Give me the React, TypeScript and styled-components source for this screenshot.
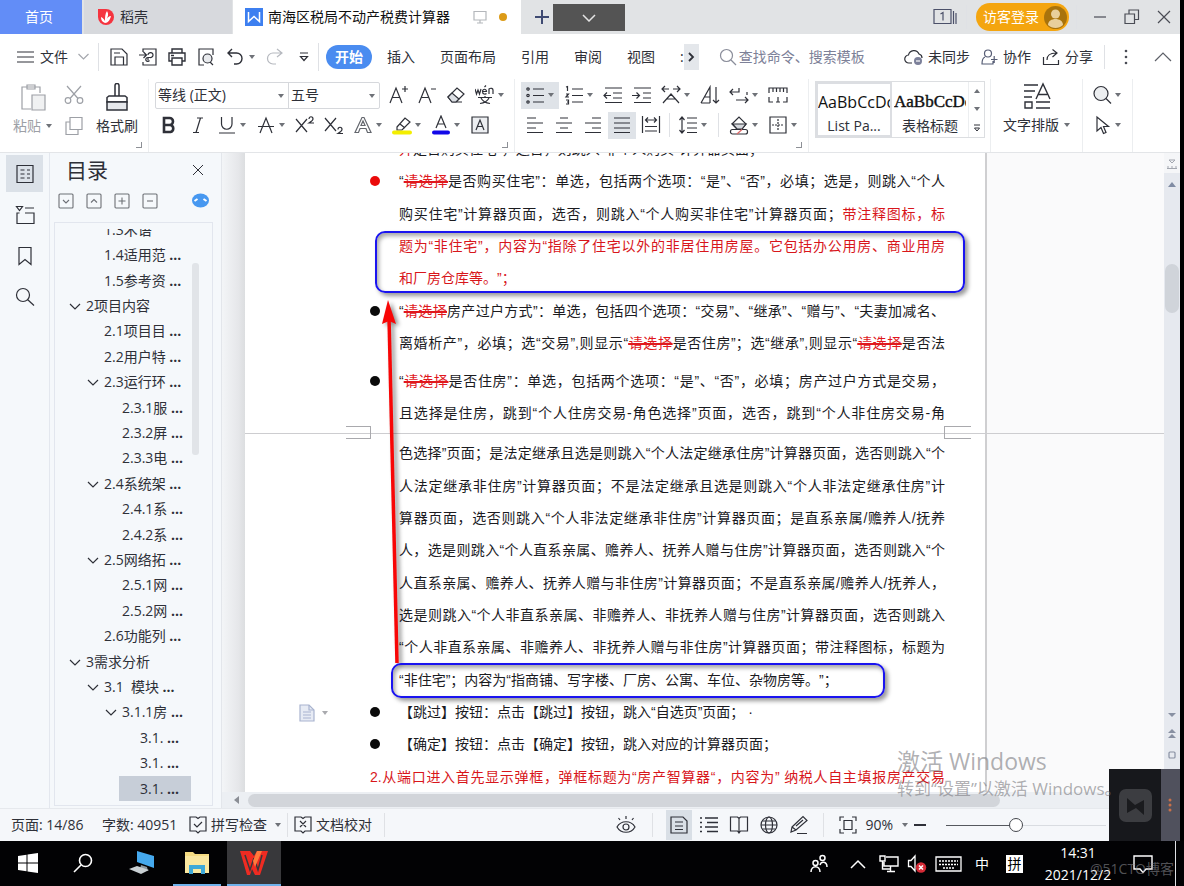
import React from 'react';
import styled, { createGlobalStyle, css } from 'styled-components';

const ui = `"Open Sans", "Noto Sans CJK SC", sans-serif`;
const ink = '#2e3038';

const Global = createGlobalStyle`
  * { box-sizing: border-box; }
  html, body { margin: 0; padding: 0; background: #000; }
  body { font-family: ${ui}; font-size: 14px; line-height: 20px; color: ${ink}; overflow: hidden; }
  button, input, select { font: inherit; color: inherit; }
  button { border: 0; background: none; padding: 0; margin: 0; white-space: nowrap; }
`;

const Desktop = styled.div`
  display: flex;
  flex-direction: column;
  height: 100vh;
`;

const Shell = styled.div`
  position: relative;
  flex: 1;
  min-height: 0;
  margin-right: 4px;
  display: flex;
  flex-direction: column;
  background: #fff;
`;

/* ---------- shared ---------- */

type IconProps = { w?: number; h?: number; sw?: number; color?: string; children: React.ReactNode };
const Icon = ({ w = 20, h = 20, sw = 1.2, color = 'currentColor', children }: IconProps) => (
  <svg width={w} height={h} viewBox={`0 0 ${w} ${h}`} fill="none" stroke={color} strokeWidth={sw} aria-hidden="true">
    {children}
  </svg>
);

const Row = styled.div`
  display: flex;
  align-items: center;
`;

const Rule = styled.span<{ $h?: number; $m?: number }>`
  flex: none;
  width: 1px;
  height: ${(p) => p.$h ?? 24}px;
  margin: 0 ${(p) => p.$m ?? 0}px;
  background: #dfe1e5;
`;

const Caret = styled.span`
  flex: none;
  width: 0;
  height: 0;
  border: 3px solid transparent;
  border-top: 4px solid #6f7278;
  border-bottom: 0;
`;

/* ---------- tab strip ---------- */

const TabStrip = styled.header`
  flex: none;
  display: flex;
  height: 34px;
  background: #e1e3e5;
`;

const Tab = styled.button<{ $kind: 'home' | 'idle' | 'active' }>`
  display: flex;
  align-items: center;
  height: 34px;
  margin-right: 2px;
  ${(p) => p.$kind === 'home' && css`width: 82px; padding-right: 4px; justify-content: center; background: #628df7; color: #fff;`}
  ${(p) => p.$kind === 'idle' && css`width: 148px; padding-left: 13px; gap: 5px; background: #d7d9dd; margin-right: 1px;`}
  ${(p) => p.$kind === 'active' && css`width: 288px; padding-left: 12px; gap: 5px; background: #fff; color: #111; margin-right: 0;`}
`;

const TabMarks = styled.span`
  display: flex;
  align-items: center;
  gap: 12px;
  margin-left: 18px;
`;

const Dirty = styled.span`
  width: 8px;
  height: 8px;
  border-radius: 50%;
  background: #dc9b17;
`;

const PlusButton = styled.button`
  width: 32px;
  padding-left: 10px;
  color: #3f4a72;
  svg { display: block; }
`;

const DarkDrop = styled.button`
  width: 72px;
  height: 27px;
  margin-top: 4px;
  background: #545454;
  color: #e4e4e4;
  svg { display: block; margin: auto; }
`;

const WindowTools = styled.div`
  display: flex;
  align-items: center;
  margin-left: auto;
`;

const Login = styled.button`
  display: flex;
  align-items: center;
  gap: 5px;
  height: 28px;
  width: 93px;
  padding-left: 7px;
  border-radius: 14px;
  background: #f4a50f;
  color: #fff;
`;

const WinButton = styled.button`
  width: 32px;
  height: 34px;
  color: #4a4c55;
  svg { display: block; margin: auto; }
`;

/* ---------- menu row ---------- */

const MenuRow = styled.nav`
  flex: none;
  display: flex;
  align-items: center;
  height: 45px;
  padding-left: 17px;
`;

const FileButton = styled.button`
  display: flex;
  align-items: center;
  gap: 6px;
  margin-right: 4px;
  svg:last-child { margin-left: 4px; }
`;

const QuickTools = styled(Row)`
  > ${Caret} { margin-right: 5px; }
`;

const QuickButton = styled.button<{ $dim?: boolean }>`
  width: 29px;
  height: 26px;
  color: ${(p) => (p.$dim ? '#b6b9bf' : ink)};
  svg { display: block; margin: auto; }
`;

const ActiveMenu = styled.button`
  width: 46px;
  height: 24px;
  margin: 0 15px 0 7px;
  border-radius: 12px;
  background: #4a8cf0;
  color: #fff;
  font-weight: 700;
`;

const MenuTabs = styled.div`
  display: flex;
  gap: 25px;
`;

const MoreMenus = styled.button`
  width: 15px;
  height: 26px;
  background: #e4e7eb;
  svg { display: block; margin: auto; }
`;

const Search = styled.label`
  display: flex;
  align-items: center;
  gap: 2px;
  margin-left: 20px;
  color: #8a8d9a;
  input {
    width: 140px;
    border: 0;
    padding: 0;
    background: none;
    outline: 0;
    &::placeholder { color: #7d8198; opacity: 1; }
  }
`;

const Cloud = styled.div`
  display: flex;
  align-items: center;
  gap: 11px;
  margin-left: auto;
`;

const CloudButton = styled.button`
  display: flex;
  align-items: center;
  gap: 5px;
`;

const Bare = styled.button<{ $w: number }>`
  width: ${(p) => p.$w}px;
  svg { display: block; margin: auto; }
`;

/* ---------- ribbon ---------- */

const Ribbon = styled.section`
  flex: none;
  display: flex;
  height: 74px;
  border-bottom: 1px solid #e3e5e8;
`;

const Group = styled.div<{ $w: number; $pad?: number }>`
  position: relative;
  flex: none;
  width: ${(p) => p.$w}px;
  padding: 2px 0 0 ${(p) => p.$pad ?? 6}px;
  border-right: 1px solid #eceef0;
`;

const Launcher = styled.button`
  position: absolute;
  right: 6px;
  bottom: 4px;
  width: 6px;
  height: 6px;
  border: solid #8d9096;
  border-width: 0 1px 1px 0;
`;

const ToolRow = styled.div`
  display: flex;
  align-items: center;
  gap: 1px;
  height: 28px;
  margin-bottom: 2px;
`;

const ToolBox = styled.button<{ $on?: boolean }>`
  flex: none;
  display: flex;
  align-items: center;
  height: 27px;
  background: ${(p) => (p.$on ? '#dfe3e8' : 'none')};
  > svg { display: block; margin: 0 4px; }
  ${Caret} { margin: 0 5px 0 -1px; }
`;

const Tool = ({ label, caret, on, children }: { label: string; caret?: boolean; on?: boolean; children: React.ReactNode }) => (
  <ToolBox aria-label={label} $on={on}>
    <Icon>{children}</Icon>
    {caret && <Caret />}
  </ToolBox>
);

const BigTool = styled.button<{ $dim?: boolean }>`
  display: flex;
  flex-direction: column;
  align-items: center;
  gap: 5px;
  color: ${(p) => (p.$dim ? '#9da0a6' : ink)};
  > svg { display: block; margin-top: 1px; }
  span { display: flex; align-items: center; gap: 5px; }
`;

const Clipboard = styled.div`
  display: flex;
  padding-top: 1px;
`;

const Stack = styled.div`
  display: flex;
  flex-direction: column;
  align-items: center;
  width: 44px;
  gap: 11px;
  padding-top: 3px;
  color: #9da0a6;
  button { height: 20px; }
  svg { display: block; }
`;

const FontBox = styled.div`
  display: flex;
  width: 225px;
  height: 27px;
  margin-right: 3px;
  border: 1px solid #d6d8dc;
  border-radius: 2px;
`;

const SelectWrap = styled.label<{ $w: number }>`
  position: relative;
  display: block;
  width: ${(p) => p.$w}px;
  & + & { border-left: 1px solid #d6d8dc; }
  select {
    width: 100%;
    height: 25px;
    padding: 0 0 0 2px;
    border: 0;
    background: none;
    appearance: none;
    outline: 0;
  }
  ${Caret} { position: absolute; right: 4px; top: 11px; }
`;

const Gallery = styled.div`
  display: flex;
  width: 170px;
  height: 57px;
  border: 1px solid #dcdee1;
`;

const StyleCard = styled.button<{ $on?: boolean; $serif?: boolean }>`
  width: 76px;
  overflow: hidden;
  text-align: center;
  border: 2px solid ${(p) => (p.$on ? '#dcdee2' : 'transparent')};
  b {
    display: block;
    overflow: hidden;
    height: 26px;
    margin-top: 6px;
    text-align: left;
    color: #111;
    font: ${(p) => (p.$serif ? '400 17px/24px "Liberation Serif", serif' : '400 16px/24px "Open Sans", sans-serif')};
    -webkit-text-stroke: ${(p) => (p.$serif ? '0.4px #111' : '0')};
  }
`;

const GallerySteps = styled.div`
  flex: 1;
  display: flex;
  flex-direction: column;
  border-left: 1px solid #eceef0;
  button { flex: 1; }
  svg { display: block; margin: auto; }
`;

/* ---------- work area ---------- */

const Work = styled.main`
  flex: 1;
  min-height: 0;
  display: flex;
  background: #f5f8fb;
`;

const SideStrip = styled.aside`
  flex: none;
  width: 50px;
  padding: 2px 0 0 6px;
  border-right: 1px solid #e3e7ee;
`;

const SideButton = styled.button<{ $on?: boolean }>`
  display: block;
  width: 37px;
  height: 37px;
  margin-bottom: 4px;
  background: ${(p) => (p.$on ? '#dbe1e8' : 'none')};
  svg { display: block; margin: auto; }
`;

const Outline = styled.aside`
  flex: none;
  display: flex;
  flex-direction: column;
  width: 172px;
  padding: 0 8px 0 4px;
  border-right: 1px solid #e3e6eb;
`;

const OutlineHead = styled.div`
  display: flex;
  align-items: center;
  justify-content: space-between;
  height: 34px;
  padding: 0 9px 0 12px;
  h2 { margin: 0; font: 400 21px/30px ${ui}; }
  svg { display: block; }
`;

const OutlineTools = styled.div`
  display: flex;
  align-items: center;
  gap: 12px;
  height: 35px;
  padding: 0 4px 8px 4px;
  svg { display: block; }
  button:last-child { margin-left: auto; }
`;

const OutlineBox = styled.div`
  position: relative;
  flex: 1;
  min-height: 0;
  margin-bottom: 2px;
  padding-top: 6px;
  border: 1px solid #e2e6ee;
  overflow: hidden;
`;

const OutlineClip = styled.ul`
  height: 100%;
  overflow: hidden;
  margin: 0;
  padding: 0;
  list-style: none;
`;

const OutlineItem = styled.li<{ $level: number; $on?: boolean }>`
  display: flex;
  align-items: center;
  height: 25px;
  margin-right: 21px;
  margin-left: ${(p) => 10 + p.$level * 18}px;
  background: ${(p) => (p.$on ? '#c7ced8' : 'none')};
  &:first-child { margin-top: -12px; }
  &:nth-child(5n), &:nth-child(5n + 2) { height: 26px; }
  > svg, > i { flex: none; width: 12px; height: 10px; margin: 0 5px 0 4px; }
  a { color: ${ink}; text-decoration: none; white-space: nowrap; }
`;

const OutlineThumb = styled.span`
  position: absolute;
  right: 13px;
  top: 40px;
  width: 7px;
  height: 192px;
  border-radius: 3px;
  background: #e1e4e8;
`;

const Viewer = styled.section`
  flex: 1;
  min-width: 0;
  display: flex;
  flex-direction: column;
`;

const Canvas = styled.div`
  position: relative;
  flex: 1;
  min-height: 0;
  display: flex;
  overflow: hidden;
  background: #fafafb;
`;

const Gutter = styled.div`
  flex: none;
  width: 23px;
  background: linear-gradient(90deg, #f3f5f7, #e6e7ea 70%, #dcdee0);
`;

const Page = styled.article`
  position: relative;
  flex: none;
  width: 742px;
  height: 100%;
  padding-left: 125px;
  background: #fff;
  border-right: 2px solid #cfcfd1;
`;

const Lines = styled.div<{ $phase: number; $before?: number }>`
  margin-top: ${(p) => p.$before ?? 0}px;
  > div:nth-child(3n + ${(p) => p.$phase}) { height: 33px; }
`;

const LineBox = styled.div`
  display: grid;
  grid-template-columns: 29px 546px;
  align-items: center;
  height: 32px;
`;

const Dot = styled.span<{ $red?: boolean }>`
  width: 10px;
  height: 10px;
  border-radius: 50%;
  background: ${(p) => (p.$red ? '#ea0a0a' : '#0a0a0a')};
`;

const Text = styled.p<{ $full?: boolean; $red?: boolean; $wide?: boolean }>`
  margin: 0;
  grid-column: ${(p) => (p.$wide ? '1 / 3' : '2')};
  font: 400 14px/24px "Liberation Sans", "Noto Sans CJK SC", sans-serif;
  color: ${(p) => (p.$red ? '#d8161b' : '#1b1b1f')};
  white-space: nowrap;
  text-spacing-trim: space-all;
  text-align: left;
  text-align-last: ${(p) => (p.$full ? 'justify' : 'left')};
`;

const Red = styled.span`
  color: #d8161b;
`;

const Struck = styled.s`
  color: #e0181d;
  text-decoration-thickness: 2px;
`;

const PageBreak = styled.div`
  position: relative;
  height: 8px;
`;

const BreakLine = styled.span`
  position: absolute;
  left: -125px;
  top: 4px;
  width: 100vw;
  height: 1px;
  background: #cdcdd0;
`;

const Corner = styled.span<{ $side: 'left' | 'right' }>`
  position: absolute;
  top: -3px;
  left: ${(p) => (p.$side === 'left' ? -24 : 574)}px;
  width: ${(p) => (p.$side === 'left' ? 25 : 27)}px;
  height: 13px;
  border: 1px solid #a9a9ad;
  border-${(p) => p.$side}: 0;
`;

const PasteTag = styled.button`
  position: absolute;
  left: 54px;
  top: 551px;
  display: flex;
  align-items: center;
  gap: 7px;
  ${Caret} { opacity: 0.6; }
`;

const Callout = styled.div<{ $x: number; $y: number; $w: number; $h: number }>`
  position: absolute;
  left: ${(p) => p.$x}px;
  top: ${(p) => p.$y}px;
  width: ${(p) => p.$w}px;
  height: ${(p) => p.$h}px;
  border: 2px solid #1a14f0;
  border-radius: 10px;
  box-shadow: 3px 3px 4px rgba(0, 0, 0, 0.4), inset 2px 3px 4px rgba(0, 0, 0, 0.35);
`;

const Arrow = styled.svg`
  position: absolute;
  left: 130px;
  top: 144px;
  filter: drop-shadow(3px 2px 2px rgba(0, 0, 0, 0.45));
`;

const HScroll = styled.div`
  flex: none;
  display: flex;
  align-items: center;
  height: 16px;
  background: #eceff3;
  padding-left: 12px;
  gap: 9px;
  i { width: 752px; height: 13px; border-radius: 7px; background: #d2d5da; }
  svg { display: block; }
`;

const VScroll = styled.div`
  flex: none;
  display: flex;
  flex-direction: column;
  align-items: center;
  width: 16px;
  padding-bottom: 46px;
  background: #e6e9ef;
  svg { display: block; }
`;

const RulerToggle = styled.div`
  width: 100%;
  height: 20px;
  padding: 6px 3px 0;
  background: #f5f6f8;
`;

const VThumb = styled.span`
  width: 14px;
  height: 49px;
  margin: 67px 0 auto;
  border-radius: 7px;
  background: #d0d4da;
`;

const Activate = styled.div`
  position: absolute;
  left: 897px;
  bottom: 40px;
  color: rgba(125, 125, 130, 0.62);
  white-space: nowrap;
  p { margin: 0; font-size: 17px; line-height: 24px; }
  p:first-child { font-size: 23px; line-height: 32px; }
`;

const Widget = styled.div`
  position: absolute;
  right: 0;
  bottom: 0;
  display: flex;
  justify-content: flex-end;
  width: 71px;
  height: 72px;
  background: #17181c;
  svg { display: block; }
`;

/* ---------- status bar ---------- */

const StatusBar = styled.footer`
  flex: none;
  display: flex;
  align-items: center;
  height: 33px;
  padding: 0 74px 0 11px;
  background: #f5f7fa;
  border-top: 1px solid #e6e9ed;
  white-space: nowrap;
  svg { display: block; }
`;

const StatusText = styled.span<{ $w: number }>`
  width: ${(p) => p.$w}px;
`;

const StatusButton = styled.button`
  display: flex;
  align-items: center;
  gap: 4px;
  ${Caret} { margin-left: 4px; }
`;

const Views = styled.div`
  display: flex;
  align-items: center;
  gap: 4px;
  margin-left: auto;
`;

const ViewButton = styled.button<{ $on?: boolean }>`
  width: 26px;
  height: 30px;
  background: ${(p) => (p.$on ? '#d9dfe6' : 'none')};
  svg { margin: auto; }
`;

const Zoom = styled.input`
  appearance: none;
  width: 160px;
  height: 16px;
  margin: 0 0 0 14px;
  background: linear-gradient(90deg, #55585e 70px, #d9dce1 70px) center / 100% 1px no-repeat;
  &::-webkit-slider-thumb {
    appearance: none;
    width: 14px;
    height: 14px;
    border: 1px solid #44474d;
    border-radius: 50%;
    background: #fff;
  }
`;

/* ---------- task bar ---------- */

const TaskBar = styled.footer`
  position: relative;
  flex: none;
  display: flex;
  height: 45px;
  background: #020204;
  color: #fff;
  svg { display: block; }
`;

const TaskButton = styled.button<{ $w: number; $run?: boolean; $on?: boolean }>`
  width: ${(p) => p.$w}px;
  height: 45px;
  margin-left: ${(p) => (p.$on ? 6 : 0)}px;
  background: ${(p) => (p.$on ? '#38383b' : 'none')};
  border-bottom: 2px solid ${(p) => (p.$run ? '#6fb1ea' : 'transparent')};
  svg { margin: auto; }
`;

const Tray = styled.div`
  display: flex;
  align-items: center;
  margin-left: auto;
  > button:last-of-type { margin-right: 7px; }
`;

const TrayButton = styled.button<{ $w: number }>`
  width: ${(p) => p.$w}px;
  text-align: center;
  svg { margin: auto; }
`;

const Pin = styled.span`
  display: inline-block;
  width: 17px;
  background: #fff;
  color: #000;
  line-height: 18px;
`;

const Clock = styled.time`
  width: 96px;
  text-align: center;
  line-height: 22px;
`;

const Credit = styled.span`
  position: absolute;
  right: 10px;
  bottom: 7px;
  color: rgba(150, 150, 155, 0.55);
`;

type Entry = [level: number, text: string, open?: boolean];
const entries: Entry[] = [
  [1, '1.3术语'],
  [1, '1.4适用范 ...'],
  [1, '1.5参考资 ...'],
  [0, '2项目内容', true],
  [1, '2.1项目目 ...'],
  [1, '2.2用户特 ...'],
  [1, '2.3运行环 ...', true],
  [2, '2.3.1服 ...'],
  [2, '2.3.2屏 ...'],
  [2, '2.3.3电 ...'],
  [1, '2.4系统架 ...', true],
  [2, '2.4.1系 ...'],
  [2, '2.4.2系 ...'],
  [1, '2.5网络拓 ...', true],
  [2, '2.5.1网 ...'],
  [2, '2.5.2网 ...'],
  [1, '2.6功能列 ...'],
  [0, '3需求分析', true],
  [1, '3.1\u00a0 模块 ...', true],
  [2, '3.1.1房 ...', true],
  [3, '3.1. ...'],
  [3, '3.1. ...'],
  [3, '3.1. ...'],
];

const EntryText = ({ text }: { text: string }) => {
  const cut = text.endsWith('...');
  return <a href="#toc">{cut ? text.slice(0, -3) : text}{cut && <b>...</b>}</a>;
};

const Line = ({ dot, full, red, wide, children }: {
  dot?: 'red' | 'black'; full?: boolean; red?: boolean; wide?: boolean; children: React.ReactNode;
}) => (
  <LineBox>
    {dot && <Dot $red={dot === 'red'} />}
    <Text $full={full} $red={red} $wide={wide}>{children}</Text>
  </LineBox>
);

const Pick = () => <Struck>请选择</Struck>;

const Tabs = () => (
  <TabStrip>
    <Tab $kind="home">首页</Tab>
    <Tab $kind="idle">
      <Icon w={18} h={18} sw={0}>
        <path d="M1 1h8a8 8 0 1 1-8 8z" fill="#f5343f" />
        <path d="M8 15c-3-1-4-3-4-6 2 1 3 2 4 4 0-4 0-7 2-10 2 3 1 6-1 9 1-2 3-4 5-4-1 4-3 7-6 7z" fill="#fff" />
      </Icon>
      稻壳
    </Tab>
    <Tab $kind="active">
      <Icon w={18} h={18} sw={1.5} color="#fff">
        <rect width="18" height="18" fill="#3d7ff0" stroke="none" />
        <path d="M3.5 4v9.5L9 8.500l5.500 5V4" />
      </Icon>
      南海区税局不动产税费计算器
      <TabMarks>
        <Icon w={14} h={14} sw={1.2} color="#b4b7bb">
          <path d="M1 1.500h12v8.500H1zM7 10v2.500M4 13h6" />
        </Icon>
        <Dirty />
      </TabMarks>
    </Tab>
    <PlusButton aria-label="新建">
      <Icon w={22} h={14} sw={2}><path d="M11 0v14M4 7h14" /></Icon>
    </PlusButton>
    <DarkDrop aria-label="标签列表">
      <Icon w={14} h={8} sw={1.500}><path d="M1 1l6 6 6-6" /></Icon>
    </DarkDrop>
    <WindowTools>
      <Icon w={24} h={18} color="#4b5069">
        <path d="M1 1.500h17v14H1zM20.500 3v13M23 5v11" />
        <path d="M7.500 6l2.500-1.500v8" />
      </Icon>
      <Rule $m={9} />
      <Login>
        访客登录
        <Icon w={23} h={23} sw={0}>
          <circle cx="11.500" cy="11.500" r="11.500" fill="#a8730c" />
          <circle cx="11.500" cy="8" r="4.500" fill="#e8cf9c" />
          <path d="M4 19c0-8 15-8 15 0-4 4-11 4-15 0z" fill="#e8cf9c" />
        </Icon>
      </Login>
      <Rule $m={7} />
      <WinButton aria-label="最小化"><Icon w={14} h={14}><path d="M1 7h12" /></Icon></WinButton>
      <WinButton aria-label="还原"><Icon w={16} h={16}><path d="M1 5h9.500v9.500H1zM5 5V1h9.500v9.500h-4" /></Icon></WinButton>
      <WinButton aria-label="关闭"><Icon w={14} h={14}><path d="M1 1l12 12M13 1L1 13" /></Icon></WinButton>
    </WindowTools>
  </TabStrip>
);

const Menu = () => (
  <MenuRow>
    <FileButton>
      <Icon w={17} h={14}><path d="M0 2h17M0 7h17M0 12h17" /></Icon>
      文件
      <Icon w={11} h={8} color="#a4a7ad"><path d="M0.500 1l5 5 5-5" /></Icon>
    </FileButton>
    <Rule $h={28} $m={5} />
    <QuickTools>
      <QuickButton aria-label="保存">
        <Icon><path d="M2 2h11l5 5v11H2zM6 18v-8h8.500v8M5 6h6" /></Icon>
      </QuickButton>
      <QuickButton aria-label="输出">
        <Icon><path d="M5 5V2h13v16H5v-3M1 8h7M5.500 5l3 3-3 3M10 13.500v-3h2a2.500 2.500 0 1 0-2-2.500M9.500 10.500a2 2 0 1 0 2 3" /></Icon>
      </QuickButton>
      <QuickButton aria-label="打印">
        <Icon sw={1.400}><path d="M5 6V2h10v4M5 14H2V6h16v8h-3M5 11h10v7H5zM4 8.500h3" /></Icon>
      </QuickButton>
      <QuickButton aria-label="打印预览">
        <Icon><path d="M8 18H3V2h14v6M17 18l-3-3" /><circle cx="11.500" cy="11.500" r="4.500" fill="#e8eaed" /></Icon>
      </QuickButton>
      <QuickButton aria-label="撤销">
        <Icon sw={1.400}><path d="M7 2L3 6l4 4M3 6h8.500a5 5 0 0 1 0 11H9" /></Icon>
      </QuickButton>
      <Caret />
      <QuickButton aria-label="恢复" $dim>
        <Icon><path d="M12 2l5 4-5 4M17 6H8a5 5 0 0 0 0 11h3" /></Icon>
      </QuickButton>
      <QuickButton aria-label="更多">
        <Icon w={12} h={12}><path d="M2 2h8M2.500 5.500L6 9.500l3.500-4z" /></Icon>
      </QuickButton>
    </QuickTools>
    <Rule $h={28} />
    <ActiveMenu>开始</ActiveMenu>
    <MenuTabs>
      <button>插入</button>
      <button>页面布局</button>
      <button>引用</button>
      <button>审阅</button>
      <button>视图</button>
      <span>:</span>
    </MenuTabs>
    <MoreMenus aria-label="更多选项卡"><Icon w={8} h={12} sw={1.800}><path d="M2 2l4 4-4 4" /></Icon></MoreMenus>
    <Search>
      <Icon w={18} h={18}><circle cx="7.500" cy="7.500" r="6" /><path d="M12 12l5 5" /></Icon>
      <input aria-label="搜索" placeholder="查找命令、搜索模板" />
    </Search>
    <Cloud>
      <CloudButton>
        <Icon w={19} h={18}>
          <path d="M8 15H5a4 4 0 0 1-.500-8A5.500 5.500 0 0 1 15 6a4 4 0 0 1 3 4" />
          <circle cx="14" cy="13" r="4" fill="#7c809a" stroke="none" /><path d="M12 13h4" stroke="#fff" />
        </Icon>
        未同步
      </CloudButton>
      <CloudButton>
        <Icon w={17} h={18} color="#555c74">
          <circle cx="7" cy="5.500" r="3.500" /><path d="M4 9c-3 1-3 4-3 7h11v-3M10 11.500h6.500M13.200 8v7" />
        </Icon>
        协作
      </CloudButton>
      <CloudButton>
        <Icon w={18} h={18}><path d="M1.500 9v7.500h15V12M5 12c0-5 3-7 9-7M10.500 1.500L15 5l-4.500 4" /></Icon>
        分享
      </CloudButton>
      <Row>
        <Rule $h={24} />
        <Bare $w={41} aria-label="菜单">
          <Icon w={4} h={16} sw={0}><g fill="#4a4c55"><circle cx="2" cy="2" r="1.300" /><circle cx="2" cy="8" r="1.300" /><circle cx="2" cy="14" r="1.300" /></g></Icon>
        </Bare>
        <Bare $w={34} aria-label="收起功能区"><Icon w={18} h={10} color="#5d6068"><path d="M1 9l8-8 8 8" /></Icon></Bare>
      </Row>
    </Cloud>
  </MenuRow>
);

const RibbonBar = () => (
  <Ribbon>
    <Group $w={149} $pad={13}>
      <Clipboard>
        <BigTool $dim>
          <Icon w={28} h={28}>
            <path d="M12 26H3V4h18v6M8 2h8v4H8z" /><path d="M13 12h13v15H13z" fill="#f0f1f2" />
          </Icon>
          <span>粘贴<Caret /></span>
        </BigTool>
        <Stack>
          <button aria-label="剪切">
            <Icon><path d="M3 1l11 12.500M17 1L6 13.500" /><circle cx="4" cy="15.500" r="2.800" /><circle cx="16" cy="15.500" r="2.800" /></Icon>
          </button>
          <button aria-label="复制">
            <Icon><path d="M6 1.500h12v12H6zM6 6H2v12.500h12v-5" /></Icon>
          </button>
        </Stack>
        <BigTool>
          <Icon w={28} h={28} sw={1.500}>
            <path d="M12 13V2.500a2 2 0 0 1 4 0V13M4 19v-4.500l2-1.500h16l2 1.500V19z" /><path d="M4 19h20v8H4z" fill="#e6e8ec" />
          </Icon>
          <span>格式刷</span>
        </BigTool>
      </Clipboard>
      <Launcher aria-label="剪贴板设置" />
    </Group>
    <Group $w={366}>
      <ToolRow>
        <FontBox>
          <SelectWrap $w={132}><select aria-label="字体"><option>等线 (正文)</option></select><Caret /></SelectWrap>
          <SelectWrap $w={91}><select aria-label="字号"><option>五号</option></select><Caret /></SelectWrap>
        </FontBox>
        <Tool label="增大字号"><path d="M2 18L8 3l6 15M4 12.500h8M14 4h6M17 1v6" /></Tool>
        <Tool label="减小字号"><path d="M2 18L8 3l6 15M4 12.500h8M14 4h5" /></Tool>
        <Tool label="清除格式"><path d="M2 12L11 3l7 6-8 8H6zM7 17h9" /><path d="M2 12l4-4 7 6-3 3H6z" fill="#dcdfe4" /></Tool>
        <Tool label="拼音指南" caret>
          <path d="M0 4l1.500 5L3 5l1.500 4L6 4M7.500 6.500h4C11.500 3.500 7.500 3.500 7.500 6.500s3 3 4 2M9.500 2L11 .500M14 9V4c2-1.500 4-.500 4 1V9M3 12.500h14M10 11v1.500M6 13c2 4 5 5 9 5.500M14 13c-2 4-5 5-9 5.500" />
        </Tool>
      </ToolRow>
      <ToolRow>
        <Tool label="加粗"><path d="M5 3h5.500a3.500 3.500 0 0 1 0 7H5zM5 10h6.500a3.600 3.600 0 0 1 0 7H5z" strokeWidth="2.600" /></Tool>
        <Tool label="倾斜"><path d="M9 3h6M5 17.500h6M12.500 3L8 17.500" /></Tool>
        <Tool label="下划线" caret><path d="M4.500 2v7a5 5 0 0 0 10.500 0V2M2 18h16" /></Tool>
        <Tool label="删除线" caret><path d="M4 18L10 3l6 15M2 11.500h16" /></Tool>
        <Tool label="上标"><path d="M1 4l11 13M12 4L1 17M14 4c0-3 4-3 4 0 0 1-1 2-4 4h5" /></Tool>
        <Tool label="下标"><path d="M1 3l11 13M12 3L1 16M14 14.500c0-3 4-3 4 0 0 1-1 2-4 4h5" /></Tool>
        <Tool label="文字效果" caret><path d="M2 17.500L9 2.500h2l7 15h-3.500l-1.500-4H7l-1.500 4zM8 10.500h4L10 6z" stroke="#63666d" /></Tool>
        <Tool label="突出显示" caret>
          <path d="M5 12l8-9 5 4-8 8H5zM8 9l5 4" /><path d="M2 17.500h16" stroke="#f3ee00" strokeWidth="4" strokeLinecap="round" />
        </Tool>
        <Tool label="字体颜色" caret>
          <path d="M5 13L10 1l5 12M6.500 9h7" /><path d="M3 17.500h14" stroke="#1208e8" strokeWidth="4" strokeLinecap="round" />
        </Tool>
        <Tool label="字符底纹"><path d="M2 2h16v16H2z" fill="#eceef1" /><path d="M6 15l4-10 4 10M7.500 11.500h5" /></Tool>
      </ToolRow>
      <Launcher aria-label="字体设置" />
    </Group>
    <Group $w={294}>
      <ToolRow>
        <Tool label="项目符号" caret on>
          <path d="M8 4h11M8 10.500h11M8 17h11" /><circle cx="3" cy="4" r="1.200" /><circle cx="3" cy="10.500" r="1.200" /><circle cx="3" cy="17" r="1.200" />
        </Tool>
        <Tool label="编号" caret>
          <path d="M8 4h11M8 10.500h11M8 17h11M2 2l1.500-.500V6M2 9h2.500L2 12h3M2 15h2.500v4H2M3 17h1.500" />
        </Tool>
        <Tool label="减少缩进"><path d="M2 3h17M10 8h9M10 13h9M2 17.500h17M1 10.500h7M4 7.500l-3 3 3 3" /></Tool>
        <Tool label="增加缩进"><path d="M2 3h17M11 8h8M11 13h8M2 17.500h17M0 10.500h7M4.500 7.500l3 3-3 3" /></Tool>
        <Tool label="中文版式" caret><path d="M1 4h7M4 1L1 4l3 3M12 4h7M16 1l3 3-3 3M2 18l8-9 8 9M6 14h8" /></Tool>
        <Tool label="排序"><path d="M1 18L10 2v16M4.500 12H10M1 18h9M16 2v16M13 15l3 3 3-3" /></Tool>
        <Tool label="换行" caret><path d="M8 7H1M4 4L1 7l3 3M10 3v4H5M10 15h9M16 12l3 3-3 3M18 7v3M7 15h4" /></Tool>
        <Tool label="标尺"><path d="M1 8V3h18v5M5 3v4M8.500 3v4M12 3v4M15.500 3v4M1 12v5h4M19 12v5h-4M10 12v5M8 17h4" /></Tool>
      </ToolRow>
      <ToolRow>
        <Tool label="左对齐"><path d="M2 3h9M2 8h16M2 13h9M2 17.500h16" /></Tool>
        <Tool label="居中"><path d="M6 3h8M2 8h16M6 13h8M2 17.500h16" /></Tool>
        <Tool label="右对齐"><path d="M9 3h9M2 8h16M9 13h9M2 17.500h16" /></Tool>
        <Tool label="两端对齐" on><path d="M2 3h16M2 8h16M2 13h16M2 17.500h16" /></Tool>
        <Tool label="分散对齐"><path d="M1.500 1v17M18.500 1v17M5 5h10M7 2.500L4.500 5 7 7.500M13 2.500L15.500 5 13 7.500M4 11.500h12M4 16h12" /></Tool>
        <Rule $m={3} />
        <Tool label="行距" caret><path d="M4 2v16M1.500 5L4 2l2.500 3M1.500 15L4 18l2.500-3M9 3h10M9 8h10M9 13h10M9 17.500h10" /></Tool>
        <Rule $m={5} />
        <Tool label="底纹颜色" caret>
          <path d="M3 9l7-7 7 7-4 5H8z" /><path d="M3.500 9h13.500l-4 5H8z" fill="#d5d8dd" /><rect x="1.500" y="14.500" width="17" height="4.500" rx="2" fill="#fff" /><path d="M8 19l5-4.500" stroke="#d66" />
        </Tool>
        <Tool label="边框" caret><path d="M2 2h16v16H2z" /><path d="M10 4v12M4 10h12" strokeDasharray="2 1" /></Tool>
      </ToolRow>
      <Launcher aria-label="段落设置" />
    </Group>
    <Group $w={182}>
      <Gallery>
        <StyleCard $on><b>AaBbCcDc</b>List Pa...</StyleCard>
        <StyleCard $serif><b>AaBbCcDc</b>表格标题</StyleCard>
        <GallerySteps>
          <button aria-label="上一行"><Icon w={6} h={4} sw={0}><path d="M0 4l3-4 3 4z" fill="#6f7278" /></Icon></button>
          <button aria-label="下一行"><Icon w={6} h={4} sw={0}><path d="M0 0l3 4 3-4z" fill="#6f7278" /></Icon></button>
          <button aria-label="全部样式"><Icon w={8} h={8} sw={1}><path d="M1 1h6M1.500 4L4 7l2.500-3z" /></Icon></button>
        </GallerySteps>
      </Gallery>
    </Group>
    <Group $w={92} $pad={12}>
      <BigTool>
        <Icon w={30} h={28} sw={1.400}><path d="M2 3h14M2 9h11M2 15h8M3 20h7v6H3zM14 20h14M14 26h14M14 17l7-15 7 15M16 12.500h9" /></Icon>
        <span>文字排版<Caret /></span>
      </BigTool>
    </Group>
    <Group $w={50} $pad={5}>
      <ToolRow><Tool label="查找" caret><circle cx="9" cy="8.500" r="7" fill="#eceef0" /><path d="M14 13.500l5 5" /></Tool></ToolRow>
      <ToolRow><Tool label="选择" caret><path d="M5 2v14l4-3.500 2.500 6 2.500-1-2.500-6h5z" /></Tool></ToolRow>
    </Group>
  </Ribbon>
);

const SideBar = () => (
  <>
    <SideStrip>
      <SideButton $on aria-label="目录"><Icon><path d="M2 1.500h16v17H2zM5.500 6h4M5.500 10h4M5.500 14h4M12 6h3M12 10h3M12 14h3" /></Icon></SideButton>
      <SideButton aria-label="章节"><Icon><path d="M1.500 1.500h6l-3 4zM10 3h9M4.500 8H2v10.500h17V8h-9" /></Icon></SideButton>
      <SideButton aria-label="书签"><Icon><path d="M4 1.500h12v17l-6-5-6 5z" /></Icon></SideButton>
      <SideButton aria-label="查找"><Icon><circle cx="8" cy="8" r="6.500" /><path d="M12.500 12.500l6.500 6" /></Icon></SideButton>
    </SideStrip>
    <Outline>
      <OutlineHead>
        <h2>目录</h2>
        <button aria-label="关闭目录"><Icon w={12} h={12} sw={1}><path d="M1 1l10 10M11 1L1 11" /></Icon></button>
      </OutlineHead>
      <OutlineTools>
        {['M5 7l3 3 3-3', 'M5 9.500l3-3 3 3', 'M4.500 8h7M8 4.500v7', 'M5 8h6'].map((d, i) => (
          <button key={i} aria-label={['展开', '收起', '增加', '减少'][i]}>
            <Icon w={16} h={16} sw={1.100} color="#6d7076"><rect x="1" y="1" width="14" height="14" rx="1" /><path d={d} /></Icon>
          </button>
        ))}
        <button aria-label="助手">
          <Icon w={17} h={15} color="#fff"><ellipse cx="8.500" cy="7.500" rx="8.500" ry="7" fill="#4798f0" stroke="none" /><path d="M2.500 8l3-2M14.500 8l-3-2" strokeWidth="2" /></Icon>
        </button>
      </OutlineTools>
      <OutlineBox>
        <OutlineClip>
          {entries.map(([level, text, open], i) => (
            <OutlineItem key={i} $level={level} $on={i === entries.length - 1}>
              {open ? <Icon w={12} h={10}><path d="M1 3l5 5 5-5" /></Icon> : <i />}
              <EntryText text={text} />
            </OutlineItem>
          ))}
        </OutlineClip>
        <OutlineThumb />
      </OutlineBox>
    </Outline>
  </>
);

const Document = () => (
  <Page>
    <Lines $phase={0} $before={-20}>
      <Line><Red>并</Red>是否购买住宅”，选否，则跳入“非个人购买”计算器页面；</Line>
      <Line dot="red" full>“<Pick />是否购买住宅”：单选，包括两个选项：“是”、“否”，必填；选是，则跳入“个人</Line>
      <Line full>购买住宅”计算器页面，选否，则跳入“个人购买非住宅”计算器页面；<Red>带注释图标，标</Red></Line>
      <Line full red>题为“非住宅”，内容为“指除了住宅以外的非居住用房屋。它包括办公用房、商业用房</Line>
      <Line red>和厂房仓库等。”；</Line>
      <Line dot="black" full>“<Pick />房产过户方式”：单选，包括四个选项：“交易”、“继承”、“赠与”、“夫妻加减名、</Line>
      <Line full>离婚析产”，必填；选“交易”,则显示“<Pick />是否住房”；选“继承”,则显示“<Pick />是否法</Line>
    </Lines>
    <Lines $phase={1} $before={5}>
      <Line dot="black" full>“<Pick />是否住房”：单选，包括两个选项：“是”、“否”，必填；房产过户方式是交易，</Line>
      <Line full>且选择是住房，跳到“个人住房交易-角色选择”页面，选否，跳到“个人非住房交易-角</Line>
    </Lines>
    <PageBreak><BreakLine /><Corner $side="left" /><Corner $side="right" /></PageBreak>
    <Lines $phase={2}>
      <Line full>色选择”页面；是法定继承且选是则跳入“个人法定继承住房”计算器页面，选否则跳入“个</Line>
      <Line full>人法定继承非住房”计算器页面；不是法定继承且选是则跳入“个人非法定继承住房”计</Line>
      <Line full>算器页面，选否则跳入“个人非法定继承非住房”计算器页面；是直系亲属/赡养人/抚养</Line>
      <Line full>人，选是则跳入“个人直系亲属、赡养人、抚养人赠与住房”计算器页面，选否则跳入“个</Line>
      <Line full>人直系亲属、赡养人、抚养人赠与非住房”计算器页面；不是直系亲属/赡养人/抚养人，</Line>
      <Line full>选是则跳入“个人非直系亲属、非赡养人、非抚养人赠与住房”计算器页面，选否则跳入</Line>
      <Line full>“个人非直系亲属、非赡养人、非抚养人赠与非住房”计算器页面；带注释图标，标题为</Line>
      <Line>“非住宅”；内容为“指商铺、写字楼、厂房、公寓、车位、杂物房等。”；</Line>
      <Line dot="black">【跳过】按钮：点击【跳过】按钮，跳入“自选页”页面； ·</Line>
      <Line dot="black">【确定】按钮：点击【确定】按钮，跳入对应的计算器页面；</Line>
      <Line full red wide>2.从端口进入首先显示弹框，弹框标题为“房产智算器“，内容为” 纳税人自主填报房产交易</Line>
    </Lines>
    <PasteTag aria-label="粘贴选项">
      <Icon w={16} h={18} color="#a9b4cf"><path d="M1 1h9l5 5v11H1z" fill="#e7ebf4" /><path d="M10 1v5h5M4 8h8M4 11h8M4 14h8" /></Icon>
      <Caret />
    </PasteTag>
    <Callout $x={130} $y={78} $w={590} $h={62} />
    <Arrow width="30" height="370" viewBox="0 0 30 370">
      <path d="M14 20L22 366" stroke="#f80606" strokeWidth="3.500" />
      <path d="M13 3L21 27 14 24 7 27z" fill="#f80606" />
    </Arrow>
    <Callout $x={146} $y={510} $w={494} $h={35} />
  </Page>
);

const Status = () => (
  <StatusBar>
    <StatusText $w={91}>页面: 14/86</StatusText>
    <StatusText $w={87}>字数: 40951</StatusText>
    <StatusButton>
      <Icon w={18} h={18}><path d="M1 1h6l2 1.500L11 1h6v14h-6l-2 2-2-2H1zM5 8l3 3 5-5" /></Icon>
      拼写检查
      <Caret />
    </StatusButton>
    <Rule $m={6} />
    <StatusButton>
      <Icon w={18} h={18}><path d="M1 1h6l2 1.500L11 1h6v14h-6l-2 2-2-2H1zM6 5l6 6M12 5l-6 6" /></Icon>
      文档校对
    </StatusButton>
    <Rule $m={12} />
    <Views>
      <ViewButton aria-label="护眼模式">
        <Icon><path d="M1 12c4-7 14-7 18 0-4 7-14 7-18 0zM10 4V1M4 5L2.500 3M16 5l1.500-2" /><circle cx="10" cy="12" r="3" /></Icon>
      </ViewButton>
      <Rule $m={9} />
      <ViewButton $on aria-label="页面视图"><Icon><path d="M2 2h12l4 4v12H2zM6 7h8M6 11h8M6 14.500h8" /></Icon></ViewButton>
      <ViewButton aria-label="大纲"><Icon sw={1.500}><path d="M6 3h13M8 7.500h11M6 12h13M8 16.500h11M1 3h2M1 7.500h2M1 12h2M1 16.500h2" /></Icon></ViewButton>
      <ViewButton aria-label="阅读版式"><Icon><path d="M1.500 2h7L10 3.500 11.500 2h7v14h-7L10 18l-1.500-2h-7zM10 3.500V18" /></Icon></ViewButton>
      <ViewButton aria-label="网页版式"><Icon><circle cx="10" cy="10" r="8" /><ellipse cx="10" cy="10" rx="3.500" ry="8" /><path d="M2 10h16M3.500 6h13M3.500 14h13" /></Icon></ViewButton>
      <ViewButton aria-label="写作模式"><Icon><path d="M3 12L14 1.500l4 4L7 15l-5 2zM3 12l4 3M7 11l7-6M8 18.500h10" /></Icon></ViewButton>
      <Rule $m={7} />
      <ViewButton aria-label="适合页面"><Icon><path d="M2 6V2h4M14 2h4v4M18 14v4h-4M6 18H2v-4M6 5.500h8v9H6z" /></Icon></ViewButton>
    </Views>
    <StatusButton><StatusText $w={33}>&nbsp;90%</StatusText><Caret /></StatusButton>
    <Bare $w={24} aria-label="缩小"><Icon w={12} h={4} sw={2}><path d="M0 2h12" /></Icon></Bare>
    <Zoom type="range" aria-label="显示比例" min={0} max={100} defaultValue={43} />
  </StatusBar>
);

const Tasks = () => (
  <TaskBar>
    <TaskButton $w={55} aria-label="开始">
      <Icon w={20} h={20} sw={0}><path d="M0 3l8.500-1.200v7.700H0zM9.500 1.600L20 0v9.500H9.500zM0 10.500h8.500v7.700L0 17zM9.500 10.500H20V20L9.500 18.400z" fill="#fff" /></Icon>
    </TaskButton>
    <TaskButton $w={56} aria-label="搜索"><Icon sw={1.600}><circle cx="12.500" cy="7.500" r="6" /><path d="M8 12l-7 7" /></Icon></TaskButton>
    <TaskButton $w={62} aria-label="此电脑">
      <Icon w={26} h={24} sw={0}><path d="M8 0l17 5v12L8 11z" fill="#45a9ee" /><path d="M12 14l6 2 1 4-8-2z" fill="#8d979e" /><path d="M0 18l8-3 12 4-8 4z" fill="#c9d0d4" /></Icon>
    </TaskButton>
    <TaskButton $w={48} $run aria-label="文件资源管理器">
      <Icon w={26} h={22} sw={0}><path d="M1 0h8l2 2h14v19H1z" fill="#f6dc82" /><path d="M1 4h24v17H1z" fill="#fbe8a0" /><path d="M5 22V13h16v9h-4v-5H9v5z" fill="#3fa9d8" /></Icon>
    </TaskButton>
    <TaskButton $w={54} $run $on aria-label="WPS 文字">
      <Icon w={28} h={26} sw={0}><path d="M0 1h10l4 5 3-5h11l-8 24h-5l-3-6-2 6H7z" fill="#ef2b22" /><path d="M5 5l5 15 4-12M14 8l4 12 4-15" stroke="#38383b" strokeWidth="1.500" fill="none" /><path d="M17 1h5l-7 16-2-6z" fill="#ff7a3c" /></Icon>
    </TaskButton>
    <Tray>
      <TrayButton $w={44} aria-label="人脉"><Icon sw={1.500}><circle cx="13.500" cy="4" r="2.500" /><circle cx="6.500" cy="9" r="2.500" /><path d="M2 18c0-7 9-7 9 0M11 11c1-4 7-4 7 2" /></Icon></TrayButton>
      <TrayButton $w={34} aria-label="隐藏的图标"><Icon w={16} h={10} sw={1.500}><path d="M1 9l7-7 7 7" /></Icon></TrayButton>
      <TrayButton $w={28} aria-label="网络"><Icon sw={1.400}><path d="M7 3h12v9H5V8M1 2h5v5H1zM3.500 7v8h8M11.500 12v5M8 17.500h8" /></Icon></TrayButton>
      <TrayButton $w={28} aria-label="音量"><Icon sw={1.300}><path d="M1.500 6.500H4L8 2v15l-4-4.500H1.500z" /><circle cx="14" cy="13.500" r="5.200" fill="#d42a36" stroke="none" /><path d="M12 11.500l4 4M16 11.500l-4 4" strokeWidth="1.500" /></Icon></TrayButton>
      <TrayButton $w={34} aria-label="触摸键盘"><Icon w={27} h={16} sw={1.300}><path d="M1 1h25v14H1z" /><path d="M4 5h19M4 8.500h19M8 12h11" strokeDasharray="2 1" /></Icon></TrayButton>
      <TrayButton $w={34}>中</TrayButton>
      <TrayButton $w={31}><Pin>拼</Pin></TrayButton>
      <Clock>14:31<br />2021/12/2</Clock>
      <TrayButton $w={34} aria-label="通知"><Icon sw={1.400}><path d="M1 2h18v13h-6l-3 3.500L7 15H1z" /></Icon></TrayButton>
      <Rule $h={45} $m={8} />
    </Tray>
    <Credit>@51CTO博客</Credit>
  </TaskBar>
);

export default function App() {
  return (
    <Desktop>
      <Global />
      <Shell>
        <Tabs />
        <Menu />
        <RibbonBar />
        <Work>
          <SideBar />
          <Viewer>
            <Canvas>
              <Gutter />
              <Document />
            </Canvas>
            <HScroll>
              <Icon w={5} h={8} sw={0}><path d="M5 0L0 4l5 4z" fill="#8b8e95" /></Icon>
              <i />
            </HScroll>
          </Viewer>
          <VScroll>
            <RulerToggle><Icon w={10} h={10} sw={1} color="#a2a6af"><path d="M2 1h6L5 4zM0 9.500h10M1 7v2M5 7v2M9 7v2" /></Icon></RulerToggle>
            <Icon w={8} h={24} sw={0}><path d="M0 14l4-5 4 5z" fill="#7f8ba3" /></Icon>
            <VThumb />
            <Icon w={8} h={50} sw={0}>
              <path d="M0 1h8L4 5zM0 21l4-4 4 4zM0 26l4-4 4 4z" fill="#8890a2" />
              <rect x="1" y="40" width="6" height="6" rx="1" stroke="#8890a2" strokeWidth="1.200" />
            </Icon>
          </VScroll>
        </Work>
        <Status />
        <Widget>
          <Icon w={71} h={72} sw={0}>
            <rect x="52" width="19" height="72" fill="#50515d" />
            <rect x="10" y="20" width="33" height="33" rx="7" fill="#3c3d41" />
            <path d="M18 29l8 7 9-5v15l-8-7-9 5z" fill="#1a1b1e" />
            <g fill="#c9714a"><circle cx="61" cy="31" r="1.500" /><circle cx="61" cy="36" r="1.500" /><circle cx="61" cy="41" r="1.500" /></g>
          </Icon>
        </Widget>
        <Activate>
          <p>激活 Windows</p>
          <p>转到“设置”以激活 Windows。</p>
        </Activate>
      </Shell>
      <Tasks />
    </Desktop>
  );
}
